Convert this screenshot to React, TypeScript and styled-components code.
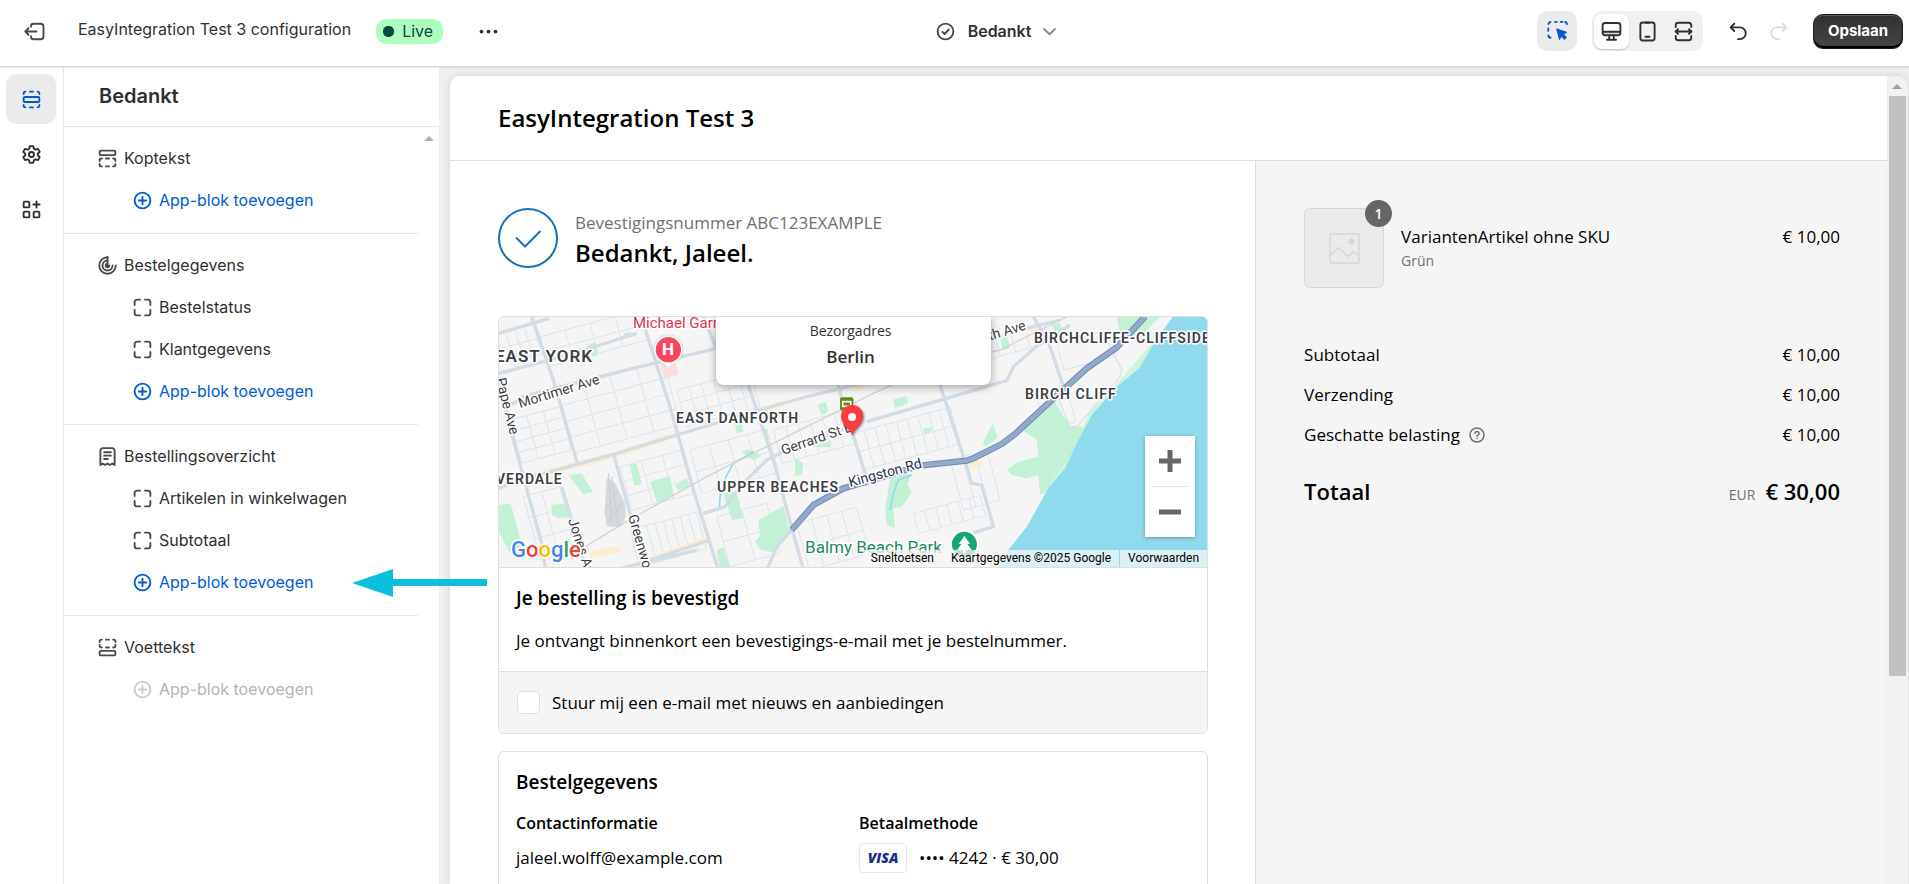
import React from 'react';
import styled, { createGlobalStyle, css } from 'styled-components';

const ui = `Inter, "Liberation Sans", sans-serif`;
const shop = `"Open Sans", "Noto Sans", sans-serif`;
const mapFont = `Roboto, "Liberation Sans", sans-serif`;

const Global = createGlobalStyle`
  *, *::before, *::after { box-sizing: border-box; }
  body { margin: 0; background: #f0f0f0; font-family: ${ui}; color: #303030; }
  h1, h2, h3, p, ul, dl, dd, dt { margin: 0; padding: 0; }
  ul { list-style: none; }
  button { font: inherit; color: inherit; border: 0; padding: 0; background: none; cursor: pointer; }
`;

/* ---------- icons ---------- */

const Svg = styled.svg<{ $size?: number }>`
  width: ${(p) => p.$size ?? 25}px;
  height: ${(p) => p.$size ?? 25}px;
  flex: none;
  display: block;
  fill: none;
  stroke: currentColor;
  stroke-width: 1.5;
  stroke-linecap: round;
  stroke-linejoin: round;
`;

const Icon = ({ children, size }: { children: React.ReactNode; size?: number }) => (
  <Svg viewBox="0 0 20 20" $size={size} aria-hidden="true">{children}</Svg>
);

const ExitIcon = () => (
  <Icon>
    <path d="M7.2 6.2v-.4a2 2 0 0 1 2-2h5.6a2.4 2.4 0 0 1 2.4 2.4v7.6a2.4 2.4 0 0 1-2.4 2.4H9.2a2 2 0 0 1-2-2v-.4" />
    <path d="M11.6 10H2.6M5.2 7.4 2.6 10l2.6 2.6" />
  </Icon>
);
const SectionsIcon = () => (
  <Icon>
    <rect x="3.7" y="8" width="12.6" height="4" rx="1" />
    <path d="M3.7 5.6v-.3a1.6 1.6 0 0 1 1.4-1.6M8.8 3.7h2.4M14.9 3.7a1.6 1.6 0 0 1 1.4 1.6v.3M3.7 14.4v.3a1.6 1.6 0 0 0 1.4 1.6M8.8 16.3h2.4M14.9 16.3a1.6 1.6 0 0 0 1.4-1.6v-.3" />
  </Icon>
);
const GearIcon = () => (
  <Icon>
    <circle cx="10" cy="10" r="2" />
    <path d="M8.6 3.3h2.8l.5 2.1 1.2.7 2.1-.6 1.4 2.4-1.6 1.5v1.2l1.6 1.5-1.4 2.4-2.1-.6-1.2.7-.5 2.1H8.6l-.5-2.1-1.2-.7-2.1.6-1.4-2.4L5 10.600V9.400L3.400 7.900l1.400-2.400 2.100.6 1.200-.7z" />
  </Icon>
);
const AppsIcon = () => (
  <Icon>
    <rect x="3.700" y="3.700" width="4.600" height="4.600" rx="1" />
    <rect x="3.700" y="11.700" width="4.600" height="4.600" rx="1" />
    <rect x="11.700" y="11.700" width="4.600" height="4.600" rx="1" />
    <path d="M14 3.500v5M11.500 6h5" />
  </Icon>
);
const HeaderIcon = () => (
  <Icon>
    <rect x="3.700" y="3.700" width="12.600" height="3.600" rx="1" />
    <path d="M3.700 12v-.6a1.400 1.400 0 0 1 1.400-1.400h.4M8.800 10h2.400M14.500 10h.4a1.400 1.400 0 0 1 1.400 1.400v.6M3.700 14.400v.5a1.400 1.400 0 0 0 1.400 1.400h.4M8.800 16.300h2.400M14.500 16.300h.4a1.400 1.400 0 0 0 1.400-1.400v-.5" />
  </Icon>
);
const FooterIcon = () => (
  <Icon>
    <rect x="3.700" y="12.700" width="12.600" height="3.600" rx="1" />
    <path d="M3.700 5.600v-.5a1.400 1.400 0 0 1 1.400-1.400h.4M8.800 3.700h2.400M14.500 3.700h.4a1.400 1.400 0 0 1 1.400 1.400v.5M3.700 8v.6A1.400 1.400 0 0 0 5.100 10h.4M8.800 10h2.400M14.500 10h.4a1.400 1.400 0 0 0 1.400-1.400V8" />
  </Icon>
);
const DetailsIcon = () => (
  <Icon>
    <path d="M10 3.400a6.600 6.600 0 1 0 6.600 6.600" />
    <path d="M10 6a4 4 0 1 0 4 4" />
    <path d="M10 3.400v7.200M10 8.600a1.400 1.400 0 1 0 1.400 1.400" />
  </Icon>
);
const ReceiptIcon = () => (
  <Icon>
    <path d="M4.300 16.800V5.200a1.900 1.900 0 0 1 1.900-1.900h7.600a1.900 1.900 0 0 1 1.900 1.900v11.600l-1.900-1.200-1.900 1.200-1.900-1.200-1.900 1.200-1.900-1.200z" />
    <path d="M7.300 6.600h5.400M7.300 9.300h5.400M7.300 12h3" />
  </Icon>
);
const BlockIcon = () => (
  <Icon>
    <path d="M8 3.700H5.700a2 2 0 0 0-2 2V8M12 3.700h2.300a2 2 0 0 1 2 2V8M8 16.300H5.700a2 2 0 0 1-2-2V12M12 16.300h2.300a2 2 0 0 0 2-2V12" />
  </Icon>
);
const PlusCircleIcon = () => (
  <Icon>
    <circle cx="10" cy="10" r="6.300" />
    <path d="M10 7v6M7 10h6" />
  </Icon>
);
const CheckCircleIcon = () => (
  <Icon>
    <circle cx="10" cy="10" r="6.300" />
    <path d="m7.600 10.300 1.700 1.700 3.300-3.600" />
  </Icon>
);
const DotsIcon = () => (
  <Icon>
    <g fill="currentColor" stroke="none">
      <circle cx="4.400" cy="10" r="1.500" />
      <circle cx="10" cy="10" r="1.500" />
      <circle cx="15.600" cy="10" r="1.500" />
    </g>
  </Icon>
);
const ChevronIcon = () => (
  <Icon><path d="m5.600 8 4.400 4.200L14.400 8" /></Icon>
);
const SelectIcon = () => (
  <Icon>
    <path d="M4.400 2.400a2 2 0 0 0-1.700 1.700M8 2.300h1.400M12.600 2.300H14M16.200 2.400a2 2 0 0 1 1.400 1.700M2.600 7.600v1.800M2.700 13.100a2 2 0 0 0 1.700 1.900" />
    <path d="m9.500 8 7.600 2.600-2.700 1.500 2.500 2.500-1.400 1.400-2.500-2.500-1.400 2.600z" fill="currentColor" strokeWidth="1" />
  </Icon>
);
const DesktopIcon = () => (
  <Icon>
    <path d="M4 10.600h12v1.600H4z" fill="#d4d4d4" stroke="none" />
    <rect x="2.900" y="3.200" width="14.200" height="9.800" rx="2" />
    <path d="M3 10.200h14M8.400 13.200l-.4 3M11.600 13.200l.4 3M6.400 16.600h7.200" />
  </Icon>
);
const PhoneIcon = () => (
  <Icon>
    <rect x="4.300" y="2.800" width="11.400" height="14.400" rx="2" />
    <path d="M8.600 3h2.800M8.400 14.200h3.200" />
  </Icon>
);
const WidthIcon = () => (
  <Icon>
    <path d="M3.800 6.400V5a2 2 0 0 1 2-2h8.400a2 2 0 0 1 2 2v1.400M3.800 13.600V15a2 2 0 0 0 2 2h8.400a2 2 0 0 0 2-2v-1.400" />
    <path d="M3.600 10h12.800M5.600 8.200 3.600 10l2 1.800M14.400 8.200l2 1.800-2 1.800" />
  </Icon>
);
const UndoIcon = () => (
  <Icon>
    <path d="M6.600 3.800 3.600 6.700l3 2.900M3.900 6.700h7.200a4.700 4.700 0 0 1 0 9.400H9.600" />
  </Icon>
);
const RedoIcon = () => (
  <Icon>
    <path d="m13.400 3.800 3 2.900-3 2.900M16.100 6.700H8.900a4.700 4.700 0 0 0 0 9.400h1.500" />
  </Icon>
);

/* ---------- top bar ---------- */

const App_ = styled.div`
  height: 100vh;
  display: flex;
  flex-direction: column;
  overflow: hidden;
`;

const TopBar = styled.header`
  position: relative;
  z-index: 2;
  flex: none;
  height: 67px;
  display: grid;
  grid-template-columns: 508px 1fr 422px;
  background: #fff;
  border-bottom: 1px solid #d6d6d6;
  box-shadow: 0 1px 2px rgba(0, 0, 0, 0.08);
  padding-bottom: 4px;
`;

const BarGroup = styled.div<{ $align?: string }>`
  display: flex;
  align-items: center;
  justify-content: ${(p) => p.$align ?? 'flex-start'};
`;

const IconButton = styled.button<{ $faint?: boolean }>`
  flex: none;
  width: 40px;
  height: 40px;
  display: grid;
  place-items: center;
  border-radius: 10px;
  color: ${(p) => (p.$faint ? '#dcdcdc' : '#303030')};
`;

const ExitButton = styled(IconButton)`
  margin-left: 14px;
  color: #4a4a4a;
`;

const ConfigName = styled.h1`
  margin-left: 24px;
  padding-bottom: 4px;
  font-size: 16px;
  line-height: 20px;
  font-weight: 400;
  white-space: nowrap;
`;

const LiveBadge = styled.span`
  flex: none;
  margin-left: 25px;
  height: 25px;
  padding: 0 10px 0 7px;
  display: flex;
  align-items: center;
  gap: 8px;
  border-radius: 10px;
  background: #affebf;
  color: #014b40;
  font-size: 16px;
  line-height: 20px;
  &::before {
    content: '';
    width: 11px;
    height: 11px;
    border-radius: 5px;
    background: #014b40;
  }
`;

const MoreButton = styled(IconButton)`
  margin-left: 25px;
`;

const PagePicker = styled.button`
  display: flex;
  align-items: center;
  font-size: 16px;
  line-height: 20px;
  font-weight: 600;
  gap: 10px;
  svg:first-child { color: #4a4a4a; }
  svg:last-child { color: #8a8a8a; margin-left: -4px; }
`;

const InspectorButton = styled(IconButton)`
  background: #ebebeb;
  color: #005bd3;
  margin-right: 15px;
`;

const Devices = styled.div`
  display: flex;
  align-items: center;
  height: 40px;
  padding: 0 2px;
  gap: 1px;
  border-radius: 10px;
  background: #f1f1f1;
  margin-right: 15px;
`;

const DeviceButton = styled.button<{ $on?: boolean }>`
  width: 35px;
  height: 35px;
  display: grid;
  place-items: center;
  border-radius: 8px;
  ${(p) => p.$on && css`
    background: #fff;
    box-shadow: 0 1px 2px rgba(0, 0, 0, 0.2);
  `}
`;

const SaveButton = styled.button`
  width: 90px;
  height: 35px;
  margin: 0 6px 0 15px;
  border-radius: 10px;
  background: linear-gradient(#303030, #454545);
  border: 1px solid #1a1a1a;
  box-shadow: inset 0 1px 0 #5a5a5a, inset 0 -2px 0 #000;
  color: #fff;
  font-size: 15px;
  line-height: 20px;
  font-weight: 700;
`;

/* ---------- left side ---------- */

const Body = styled.div`
  flex: 1;
  min-height: 0;
  display: flex;
`;

const Rail = styled.nav`
  width: 64px;
  flex: none;
  padding: 7px 6px;
  display: flex;
  flex-direction: column;
  gap: 5px;
  background: #fff;
  border-right: 1px solid #e8e8e8;
`;

const RailButton = styled.button<{ $on?: boolean }>`
  width: 50px;
  height: 50px;
  display: grid;
  place-items: center;
  border-radius: 10px;
  background: ${(p) => (p.$on ? '#ebebeb' : 'transparent')};
  color: ${(p) => (p.$on ? '#005bd3' : '#303030')};
`;

const Sidebar = styled.aside`
  width: 375px;
  flex: none;
  display: flex;
  flex-direction: column;
  background: #fff;
`;

const SidebarTitle = styled.h2`
  height: 60px;
  flex: none;
  padding: 17px 35px;
  border-bottom: 1px solid #e8e8e8;
  font-size: 20px;
  line-height: 24px;
  font-weight: 600;
`;

const SidebarBody = styled.div`
  display: flex;
`;

const Tree = styled.div`
  flex: 1;
`;

const Gutter = styled.div`
  width: 21px;
  padding: 9px 6px;
`;

const Triangle = styled.i<{ $color: string }>`
  display: block;
  width: 0;
  height: 0;
  margin: 0 auto;
  border: 5px solid transparent;
  border-top: 0;
  border-bottom-color: ${(p) => p.$color};
`;

const Section = styled.section`
  padding: 10px 0 12px;
  & + & { border-top: 1px solid #e8e8e8; }
`;

const Row = styled.div<{ $nested?: boolean }>`
  position: relative;
  height: 42px;
  display: flex;
  align-items: center;
  gap: 4px;
  padding-left: ${(p) => (p.$nested ? 66 : 31)}px;
  font-size: 16px;
  line-height: 20px;
  svg { color: #4a4a4a; }
`;

const AddButton = styled.button`
  display: flex;
  align-items: center;
  gap: 4px;
  color: #005bd3;
  svg { color: inherit; }
  &:disabled { color: #b5b5b5; svg { color: #cccccc; } }
`;

const Pointer = styled.svg`
  position: absolute;
  z-index: 3;
  left: 288px;
  top: 8px;
  width: 135px;
  height: 28px;
`;

/* ---------- preview ---------- */

const Preview = styled.main`
  flex: 1;
  min-width: 0;
  padding: 9px 1px 0 11px;
  display: flex;
  background: #f0f0f0;
`;

const Frame = styled.div`
  flex: 1;
  min-width: 0;
  display: flex;
  border-radius: 10px 10px 0 0;
  background: #f1f1f1;
  box-shadow: 0 0 10px rgba(0, 0, 0, 0.12);
  overflow: hidden;
`;

const Page = styled.div`
  flex: 1;
  min-width: 0;
  display: flex;
  flex-direction: column;
  background: #fff;
  color: #000;
  font-family: ${shop};
  font-size: 17px;
  line-height: 24px;
`;

const ScrollTrack = styled.div`
  width: 21px;
  flex: none;
  padding: 8px 4px 0 2px;
`;

const Thumb = styled.div`
  width: 17px;
  height: 580px;
  margin: 7px 0 0;
  background: #c1c1c1;
`;

const ShopHeader = styled.div`
  height: 85px;
  flex: none;
  padding: 26px 48px;
  border-bottom: 1px solid #dedede;
`;

const ShopName = styled.h2`
  font-size: 24px;
  line-height: 32px;
  font-weight: 600;
`;

const Columns = styled.div`
  flex: 1;
  min-height: 0;
  display: grid;
  grid-template-columns: minmax(0, 23fr) minmax(0, 18fr);
`;

const MainColumn = styled.div`
  padding: 47px 47px 0 48px;
  border-right: 1px solid #dedede;
  overflow: hidden;
`;

const SideColumn = styled.div`
  padding: 47px 47px 0 48px;
  background: #f5f5f5;
`;

const Confirmation = styled.div`
  display: flex;
  gap: 17px;
  height: 60px;
  margin-bottom: 48px;
`;

const ConfirmationText = styled.div`
  padding-top: 3px;
`;

const Tick = styled.svg`
  width: 60px;
  height: 60px;
  fill: none;
  stroke: #1773b0;
  stroke-width: 2;
`;

const Muted = styled.p`
  color: #707070;
`;

const Thanks = styled.h2`
  font-size: 24px;
  line-height: 36px;
  font-weight: 600;
`;

const Card = styled.section`
  border: 1px solid #dedede;
  border-radius: 6px;
  overflow: hidden;
  margin-bottom: 17px;
`;

const CardBody = styled.div`
  padding: 17px 17px 18px;
`;

const CardTitle = styled.h3`
  font-size: 19px;
  line-height: 26px;
  font-weight: 600;
`;

const CardText = styled.p`
  margin-top: 18px;
`;

const Consent = styled.label`
  display: flex;
  align-items: center;
  gap: 12px;
  height: 62px;
  padding: 0 18px;
  background: #f5f5f5;
  border-top: 1px solid #dedede;
`;

const Checkbox = styled.input`
  appearance: none;
  width: 23px;
  height: 23px;
  margin: 0;
  border: 1px solid #dedede;
  border-radius: 5px;
  background: #fff;
`;

const Facts = styled.div`
  display: grid;
  grid-template-columns: 1fr 1fr;
  column-gap: 12px;
  margin-top: 16px;
`;

const FactTitle = styled.h4`
  margin: 0 0 8px;
  font-size: 16px;
  line-height: 24px;
  font-weight: 600;
`;

const FactValue = styled.p`
  display: flex;
  align-items: center;
  gap: 12px;
  height: 30px;
`;

const Visa = styled.span`
  width: 48px;
  height: 30px;
  display: grid;
  place-items: center;
  border: 1px solid #e6e6e6;
  border-radius: 4px;
  color: #1a2b8f;
  font-size: 14px;
  line-height: 16px;
  font-weight: 800;
  font-style: italic;
`;

/* ---------- map ---------- */

const MapBox = styled.div`
  position: relative;
  height: 251px;
  border-bottom: 1px solid #dedede;
  background: #f5f5f5;
  overflow: hidden;
`;

const MapSvg = styled.svg`
  display: block;
  width: 100%;
  height: 250px;
`;

const MapLabel = styled.text<{ $size?: number; $color?: string; $area?: boolean }>`
  font-family: ${mapFont};
  font-size: ${(p) => p.$size ?? 14}px;
  font-weight: ${(p) => (p.$area ? 600 : 400)};
  letter-spacing: ${(p) => (p.$area ? '1px' : 'normal')};
  fill: ${(p) => p.$color ?? '#3c4043'};
  stroke: #fff;
  stroke-width: 3px;
  stroke-linejoin: round;
  paint-order: stroke;
`;

const Popup = styled.div`
  position: absolute;
  top: 0;
  left: calc(50% - 137px);
  width: 275px;
  height: 68px;
  padding: 2px 6px 0 0;
  border-radius: 0 0 8px 8px;
  background: #fff;
  box-shadow: 0 2px 8px rgba(0, 0, 0, 0.35);
  text-align: center;
  color: #333;
`;

const PopupLabel = styled.p`
  font-size: 14px;
  line-height: 24px;
`;

const PopupPlace = styled.p`
  font-size: 17px;
  line-height: 28px;
  font-weight: 600;
`;

const ZoomControl = styled.div`
  position: absolute;
  right: 12px;
  top: 119px;
  width: 50px;
  display: flex;
  flex-direction: column;
  background: #fff;
  box-shadow: 0 1px 4px rgba(0, 0, 0, 0.3);
`;

const ZoomButton = styled.button`
  height: 50px;
  display: grid;
  place-items: center;
  color: #666;
  svg { stroke-width: 5; stroke-linecap: butt; }
`;

const ZoomRule = styled.hr`
  width: 37px;
  margin: 0 auto;
  border: 0;
  border-top: 1px solid #e6e6e6;
`;

const Credits = styled.div`
  position: absolute;
  right: 0;
  bottom: 0;
  display: flex;
  gap: 1px;
  font-family: ${mapFont};
  font-size: 12px;
  line-height: 17px;
`;

const Credit = styled.a`
  padding: 0 8px;
  color: #000;
  text-decoration: none;
  background: rgba(245, 245, 245, 0.75);
`;

const patch = (x: number, y: number, w: number, h: number, nx: number, ny: number) => {
  let d = '';
  for (let i = 0; i <= nx; i++) {
    const px = x + (w * i) / nx;
    const py = y - 0.27 * (px - x);
    d += `M${px} ${py}l${h * 0.27} ${h}`;
  }
  for (let j = 0; j <= ny; j++) {
    const k = (h * j) / ny;
    d += `M${x + k * 0.27} ${y + k}l${w} ${-w * 0.27}`;
  }
  return d;
};

const minorRoads = [
  patch(20, 70, 110, 90, 4, 2),
  patch(150, 80, 300, 90, 4, 2),
  patch(60, 330, 150, 130, 3, 4),
  patch(200, 240, 320, 190, 4, 4),
  patch(560, 240, 220, 110, 6, 3),
  patch(390, 470, 190, 130, 3, 3),
  patch(600, 420, 230, 130, 4, 2),
  patch(100, 560, 110, 190, 2, 3),
  patch(420, 660, 200, 110, 8, 1),
  patch(680, 620, 150, 150, 2, 2),
  patch(850, 360, 220, 100, 6, 2),
  patch(920, 640, 180, 140, 4, 2),
  patch(1090, 370, 290, 110, 9, 2),
  patch(1270, 610, 200, 60, 6, 1),
  patch(1380, 450, 110, 150, 3, 1),
  patch(1470, 90, 180, 60, 4, 1),
  patch(1640, 260, 90, 100, 1, 1),
  patch(1700, 100, 160, 80, 1, 1),
].join('');

const CityMap = () => (
  <MapSvg viewBox="0 0 708 250" preserveAspectRatio="xMidYMin slice" role="img" aria-label="Kaart">
    <g transform="translate(-9 -7) scale(0.33333)" fill="none" strokeLinejoin="round">
      <rect x="0" y="0" width="2200" height="800" fill="#f5f5f5" />
      <path d={minorRoads} stroke="#dce4ec" strokeWidth="3" />
      <path
        fill="#c3f1d5"
        d="M27 585l35-5 35 130-40 15-30-60zM235 495l40-5 20 35 15 20-30 8zM183 585l45-5 10 40-30 5-22-10zM418 462h22l15 60-22 5zM480 515l60-18 12 60-50 22zM555 525l35-18 10 20-35 15zM700 550l40-5 20 80-35 5zM755 425l20-8 40 20-25 15zM805 630l75-42 20 80-50 60-40-10-15-25 15-15zM290 110l25-15 8 40-15 5zM400 70l20-5 5 12-20 5zM982 285l25-10 8 30-20 10zM735 345l20-5 5 25-20 5zM820 360l12-3 5 28-12 2zM915 445l25 15-5 35-20 3zM960 410l65-18-5 20zM680 720l20-8 20 60-30 5zM1210 268l40-10 5 22-40 15zM1300 358l28-8-6 16-18 10zM1478 400l30-60 15 45-38 25zM1530 80l20-6 10 40-22 8zM1685 45l25-8 5 20-22 5zM1880 20h130l-60 60-60-10zM1200 505l65-15-12 30 12 30-30 40-25 5 5 60-25-10-5-45z"
      />
      <path fill="#c3f1d5" d="M1695 275l45 75 60 0 0 60-90 115-60 30-5-60-35 10-45-10-15-15 35-25 60-15-5-50-45-30z" />
      <path fill="#cef4dc" d="M1985 100l40-50 25-30v60l-90 120-110 100-60 90-70 130-50 60-20 80-35 60-50 60-30 20 60-120 60-90 30-80 70-90 40-110 60-60z" />
      <path d="M790 425l-60 35-22 40-18 60-2 40M1265 495l-40 15-15 40-10 50" stroke="#90daee" strokeWidth="5" />
      <path d="M350 500l25 20 30 60 2 40-15 30h-40l-8-40z" fill="#d6dade" />
      <path d="M355 490l10 150M365 500l20 150M345 600l40-60M350 640l50-60" stroke="#c9ced4" strokeWidth="3" />
      <path d="M27 530l90-30 180-45 80-20 160-55M790 310l90-30M480 750l180-65M300 735l90-20M1090 235l60-20M1440 465l35-5M1595 60l60-10" stroke="#fdedd0" strokeWidth="18" />
      <path
        stroke="#d2dce5"
        strokeWidth="10"
        d="M27 535l63-25 290-80 180-55 300-90 110-30 250-60M1130 335l240-70 180-53 20-42 80-70 90-55M125 20l65 190 72 250M20 200l80 300 55 200 12 80M370 430l50 180 60 170M460 40l80 250 70 250 50 160 25 80M770 210l80 240 90 330M215 530l75 250M27 70l150-45M27 190l153-40 150-45 110-35M40 300l60-40 230-60 160-40 190-45M640 610l65-20 55-70 70-70 40-20 210-80M830 780l30-70 45-50M640 20l40 100M480 750l180-60M1350 225l80 245 15 50 30 5 35 125-60 18M1040 215l85 275v20M1630 20l50 90 40 120M1590 60l120-30M370 780l250-60"
      />
      <path d="M1690 230l50 120 20 0 60-70 70-80 5-20-50-100" stroke="#d8e1ea" strokeWidth="4" />
      <path d="M240 740l30-20 130-80 250-140 200-100 180-90 120-60 200-90 180-40 200-100" stroke="#d0d2d6" strokeWidth="4" />
      <path d="M905 660l65-75 90-50 230-68 140-15 20-7 85-43 40-30 105-97 110-100 90-63 85-92" stroke="#6f89b3" strokeWidth="19" />
      <path d="M905 660l65-75 90-50 230-68 140-15 20-7 85-43 40-30 105-97 110-100 90-63 85-92" stroke="#94aacb" strokeWidth="13" />
      <path fill="#90daee" d="M2048 20l-60 85-40 70-68 55-75 85-45 85-35 75-50 60-65 115-60 75-30 60h700V20z" />
      <path fill="#fbdedd" d="M510 160l45-12 10 45-42 14z" />
      <rect x="1050" y="262" width="40" height="40" rx="6" fill="#5b8c1c" />
      <path d="M1058 275h24v14h-24z" stroke="#fff" strokeWidth="5" />
      <path d="M535 176c-8-12-44-26-44-58a44 44 0 0 1 88 0c0 32-36 46-44 58z" fill="#fff" stroke="#c9c9c9" strokeWidth="2" />
      <circle cx="535" cy="119" r="38" fill="#f8485e" />
      <circle cx="1423" cy="703" r="40" fill="#17a673" stroke="#fff" strokeWidth="5" />
      <path d="M1423 678l17 24h-8l13 18h-18v10h-8v-10h-18l13-18h-8z" fill="#fff" />
    </g>
    <MapLabel $size={15} $color="#d93650" x="134" y="11">Michael Garron</MapLabel>
    <text x="169" y="38" textAnchor="middle" fontFamily={mapFont} fontSize="17" fontWeight="700" fill="#fff">H</text>
    <MapLabel $area $size={17} x="-4" y="45">EAST YORK</MapLabel>
    <MapLabel $area x="177" y="106">EAST DANFORTH</MapLabel>
    <MapLabel $area x="-3" y="167">VERDALE</MapLabel>
    <MapLabel $area x="218" y="175">UPPER BEACHES</MapLabel>
    <MapLabel $area x="535" y="26">BIRCHCLIFFE-CLIFFSIDE</MapLabel>
    <MapLabel $area x="526" y="82">BIRCH CLIFF</MapLabel>
    <MapLabel transform="translate(21 91) rotate(-17)">Mortimer Ave</MapLabel>
    <MapLabel transform="translate(-3 62) rotate(76)">Pape Ave</MapLabel>
    <MapLabel transform="translate(69 203) rotate(72)">Jones Ave</MapLabel>
    <MapLabel transform="translate(129 199) rotate(74)">Greenwood</MapLabel>
    <MapLabel transform="translate(284 138) rotate(-19)">Gerrard St E</MapLabel>
    <MapLabel $color="#2b3550" transform="translate(351 170) rotate(-15)">Kingston Rd</MapLabel>
    <MapLabel transform="translate(450 36) rotate(-17)">Danforth Ave</MapLabel>
    <MapLabel $size={17} $color="#1d8a63" x="306" y="236">Balmy Beach Park</MapLabel>
    <path
      d="M353 118c-2-6-11-10-11-19a11 11 0 0 1 22 0c0 9-9 13-11 19z"
      fill="#fb3b3f"
      style={{ filter: 'drop-shadow(1px 1px 1px rgba(0,0,0,.5))' }}
    />
    <circle cx="353" cy="100" r="4" fill="#fff" />
    <MapLabel $size={22} x="12" y="240" style={{ fontWeight: 500 }}>
      <tspan fill="#4285f4">G</tspan><tspan fill="#ea4335">o</tspan><tspan fill="#fbbc04">o</tspan>
      <tspan fill="#4285f4">g</tspan><tspan fill="#34a853">l</tspan><tspan fill="#ea4335">e</tspan>
    </MapLabel>
  </MapSvg>
);

/* ---------- order summary ---------- */

const Product = styled.div`
  display: flex;
  align-items: center;
  gap: 17px;
  margin-bottom: 47px;
`;

const Thumbnail = styled.div`
  position: relative;
  width: 80px;
  height: 80px;
  flex: none;
  display: grid;
  place-items: center;
  border: 1px solid #d6d6d6;
  border-radius: 6px;
  background: #ebebeb;
  color: #d6d6d6;
`;

const Quantity = styled.span`
  position: absolute;
  top: -9px;
  right: -9px;
  width: 27px;
  height: 27px;
  display: grid;
  place-items: center;
  border-radius: 14px;
  background: #666;
  color: #fff;
  font-size: 14px;
  line-height: 20px;
  font-weight: 600;
`;

const ProductInfo = styled.div`
  flex: 1;
  align-self: flex-start;
  padding-top: 17px;
`;

const Small = styled.p`
  font-size: 14px;
  line-height: 20px;
  color: #707070;
  padding-top: 2px;
`;

const Price = styled.span`
  align-self: flex-start;
  padding-top: 17px;
`;

const Totals = styled.dl`
  display: flex;
  flex-direction: column;
`;

const TotalRow = styled.div<{ $grand?: boolean }>`
  display: flex;
  align-items: center;
  justify-content: space-between;
  height: 40px;
  ${(p) => p.$grand && css`
    margin-top: 16px;
    font-size: 22px;
    line-height: 32px;
    font-weight: 600;
  `}
`;

const TotalName = styled.dt`
  display: flex;
  align-items: center;
  gap: 9px;
`;

const TotalValue = styled.dd`
  display: flex;
  align-items: baseline;
  gap: 10px;
`;

const Currency = styled.span`
  font-size: 14px;
  line-height: 20px;
  font-weight: 400;
  color: #707070;
`;

const HelpButton = styled.button`
  color: #707070;
`;

/* ---------- data ---------- */

type Entry = { title: string; icon: React.ReactNode; blocks: string[]; disabled?: boolean; pointed?: boolean };

const sections: Entry[] = [
  { title: 'Koptekst', icon: <HeaderIcon />, blocks: [] },
  { title: 'Bestelgegevens', icon: <DetailsIcon />, blocks: ['Bestelstatus', 'Klantgegevens'] },
  { title: 'Bestellingsoverzicht', icon: <ReceiptIcon />, blocks: ['Artikelen in winkelwagen', 'Subtotaal'], pointed: true },
  { title: 'Voettekst', icon: <FooterIcon />, blocks: [], disabled: true },
];

export default function App() {
  return (
    <App_>
      <Global />
      <TopBar>
        <BarGroup>
          <ExitButton aria-label="Afsluiten"><ExitIcon /></ExitButton>
          <ConfigName>EasyIntegration Test 3 configuration</ConfigName>
          <LiveBadge>Live</LiveBadge>
          <MoreButton aria-label="Meer"><DotsIcon /></MoreButton>
        </BarGroup>
        <BarGroup $align="center">
          <PagePicker><CheckCircleIcon />Bedankt<ChevronIcon /></PagePicker>
        </BarGroup>
        <BarGroup $align="flex-end">
          <InspectorButton aria-label="Inspecteren"><SelectIcon /></InspectorButton>
          <Devices>
            <DeviceButton $on aria-label="Desktop"><DesktopIcon /></DeviceButton>
            <DeviceButton aria-label="Mobiel"><PhoneIcon /></DeviceButton>
            <DeviceButton aria-label="Volledige breedte"><WidthIcon /></DeviceButton>
          </Devices>
          <IconButton aria-label="Ongedaan maken"><UndoIcon /></IconButton>
          <IconButton $faint disabled aria-label="Opnieuw"><RedoIcon /></IconButton>
          <SaveButton>Opslaan</SaveButton>
        </BarGroup>
      </TopBar>

      <Body>
        <Rail>
          <RailButton $on aria-label="Secties"><SectionsIcon /></RailButton>
          <RailButton aria-label="Instellingen"><GearIcon /></RailButton>
          <RailButton aria-label="Apps"><AppsIcon /></RailButton>
        </Rail>

        <Sidebar>
          <SidebarTitle>Bedankt</SidebarTitle>
          <SidebarBody>
            <Tree>
              {sections.map((s) => (
                <Section key={s.title}>
                  <Row>{s.icon}{s.title}</Row>
                  {s.blocks.map((b) => (
                    <Row $nested key={b}><BlockIcon />{b}</Row>
                  ))}
                  <Row $nested>
                    <AddButton disabled={s.disabled}><PlusCircleIcon />App-blok toevoegen</AddButton>
                    {s.pointed && (
                      <Pointer viewBox="0 0 135 28" aria-hidden="true">
                        <path d="M0 14 41 0v10h94v7H41v11z" fill="#0dbfde" />
                      </Pointer>
                    )}
                  </Row>
                </Section>
              ))}
            </Tree>
            <Gutter><Triangle $color="#b0b0b0" /></Gutter>
          </SidebarBody>
        </Sidebar>

        <Preview>
          <Frame>
            <Page>
              <ShopHeader><ShopName>EasyIntegration Test 3</ShopName></ShopHeader>
              <Columns>
                <MainColumn>
                  <Confirmation>
                    <Tick viewBox="0 0 60 60" aria-hidden="true">
                      <circle cx="30" cy="30" r="29" />
                      <path d="m18 29.500 9 9L42.500 23" />
                    </Tick>
                    <ConfirmationText>
                      <Muted>Bevestigingsnummer ABC123EXAMPLE</Muted>
                      <Thanks>Bedankt, Jaleel.</Thanks>
                    </ConfirmationText>
                  </Confirmation>

                  <Card>
                    <MapBox>
                      <CityMap />
                      <Popup>
                        <PopupLabel>Bezorgadres</PopupLabel>
                        <PopupPlace>Berlin</PopupPlace>
                      </Popup>
                      <ZoomControl>
                        <ZoomButton aria-label="Inzoomen">
                          <Svg viewBox="0 0 22 22" $size={22}><path d="M0 11h22M11 0v22" /></Svg>
                        </ZoomButton>
                        <ZoomRule />
                        <ZoomButton aria-label="Uitzoomen">
                          <Svg viewBox="0 0 22 22" $size={22}><path d="M0 11h22" /></Svg>
                        </ZoomButton>
                      </ZoomControl>
                      <Credits>
                        <Credit href="#sneltoetsen">Sneltoetsen</Credit>
                        <Credit href="#kaartgegevens">Kaartgegevens ©2025 Google</Credit>
                        <Credit href="#voorwaarden">Voorwaarden</Credit>
                      </Credits>
                    </MapBox>
                    <CardBody>
                      <CardTitle>Je bestelling is bevestigd</CardTitle>
                      <CardText>Je ontvangt binnenkort een bevestigings-e-mail met je bestelnummer.</CardText>
                    </CardBody>
                    <Consent>
                      <Checkbox type="checkbox" />
                      Stuur mij een e-mail met nieuws en aanbiedingen
                    </Consent>
                  </Card>

                  <Card>
                    <CardBody>
                      <CardTitle>Bestelgegevens</CardTitle>
                      <Facts>
                        <div>
                          <FactTitle>Contactinformatie</FactTitle>
                          <FactValue>jaleel.wolff@example.com</FactValue>
                        </div>
                        <div>
                          <FactTitle>Betaalmethode</FactTitle>
                          <FactValue><Visa>VISA</Visa>•••• 4242 · € 30,00</FactValue>
                        </div>
                      </Facts>
                    </CardBody>
                  </Card>
                </MainColumn>

                <SideColumn>
                  <Product>
                    <Thumbnail>
                      <Svg viewBox="0 0 31 31" $size={31} aria-hidden="true">
                        <rect x="1" y="1" width="29" height="29" rx="1" />
                        <path d="m1.500 22.500 8-8 10 9 5-5 5 4" />
                        <circle cx="22.500" cy="8.500" r="3" fill="currentColor" stroke="none" />
                      </Svg>
                      <Quantity>1</Quantity>
                    </Thumbnail>
                    <ProductInfo>
                      <p>VariantenArtikel ohne SKU</p>
                      <Small>Grün</Small>
                    </ProductInfo>
                    <Price>€ 10,00</Price>
                  </Product>
                  <Totals>
                    <TotalRow><TotalName>Subtotaal</TotalName><TotalValue>€ 10,00</TotalValue></TotalRow>
                    <TotalRow><TotalName>Verzending</TotalName><TotalValue>€ 10,00</TotalValue></TotalRow>
                    <TotalRow>
                      <TotalName>
                        Geschatte belasting
                        <HelpButton aria-label="Uitleg">
                          <Svg viewBox="0 0 16 16" $size={16}>
                            <circle cx="8" cy="8" r="7" />
                            <path d="M6 6.400a2 2 0 1 1 2.900 1.800c-.6.300-.9.600-.9 1.200M8 11.400v.1" />
                          </Svg>
                        </HelpButton>
                      </TotalName>
                      <TotalValue>€ 10,00</TotalValue>
                    </TotalRow>
                    <TotalRow $grand>
                      <TotalName>Totaal</TotalName>
                      <TotalValue><Currency>EUR</Currency>€ 30,00</TotalValue>
                    </TotalRow>
                  </Totals>
                </SideColumn>
              </Columns>
            </Page>
            <ScrollTrack>
              <Triangle $color="#a0a0a0" />
              <Thumb />
            </ScrollTrack>
          </Frame>
        </Preview>
      </Body>
    </App_>
  );
}
